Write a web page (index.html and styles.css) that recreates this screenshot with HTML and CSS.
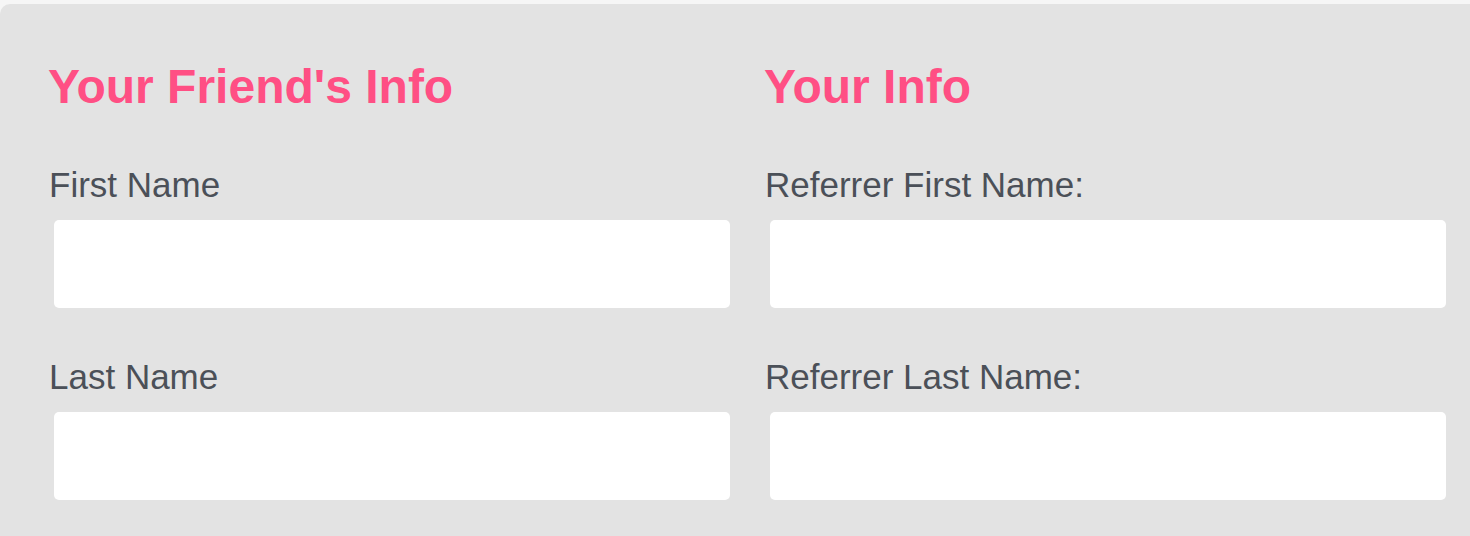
FILE: index.html
```html
<!DOCTYPE html>
<html lang="en">
<head>
<meta charset="utf-8">
<title>Referral Form</title>
<link rel="stylesheet" href="styles.css">
</head>
<body>
<form class="panel">
  <section class="col">
    <h2 class="heading">Your Friend's Info</h2>
    <div class="field">
      <label class="label" for="f1">First Name</label>
      <input class="input" id="f1" type="text">
    </div>
    <div class="field">
      <label class="label" for="f2">Last Name</label>
      <input class="input" id="f2" type="text">
    </div>
  </section>
  <section class="col">
    <h2 class="heading">Your Info</h2>
    <div class="field">
      <label class="label" for="r1">Referrer First Name:</label>
      <input class="input" id="r1" type="text">
    </div>
    <div class="field">
      <label class="label" for="r2">Referrer Last Name:</label>
      <input class="input" id="r2" type="text">
    </div>
  </section>
</form>
</body>
</html>
```
FILE: styles.css
```css
html, body {
  margin: 0;
  padding: 0;
}
body {
  background: #f6f6f6;
  padding-top: 4px;
  height: 532px;
  overflow: hidden;
  font-family: "Liberation Sans", Arial, Helvetica, sans-serif;
}
.panel {
  margin: 0;
  background: #e3e3e3;
  border-top-left-radius: 10px;
  height: 532px;
  box-sizing: border-box;
  padding: 55px 24px 0 47px;
  display: grid;
  grid-template-columns: 683px 683px;
  column-gap: 33px;
  align-items: start;
}
.col {
  display: flex;
  flex-direction: column;
}
.heading {
  margin: 0 0 50px 0;
  padding-left: 1px;
  font-size: 48px;
  line-height: 56px;
  font-weight: bold;
  color: #ff4f84;
}
.field {
  display: flex;
  flex-direction: column;
  margin-bottom: 49px;
}
.label {
  padding-left: 2px;
  font-size: 35px;
  line-height: 40px;
  color: #4b5058;
  margin-bottom: 15px;
}
.input {
  display: block;
  margin: 0 0 0 7px;
  width: 676px;
  height: 88px;
  box-sizing: border-box;
  border: none;
  border-radius: 5px;
  background: #ffffff;
  padding: 0 16px;
  font-size: 32px;
  font-family: inherit;
  outline: none;
}
```
